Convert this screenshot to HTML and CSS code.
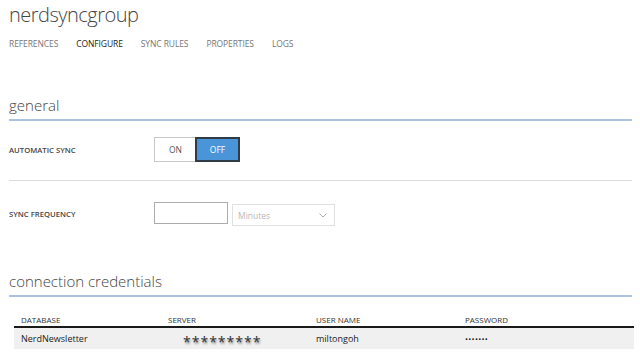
FILE: index.html
```html
<!DOCTYPE html>
<html>
<head>
<meta charset="utf-8">
<link rel="stylesheet" href="styles.css">
</head>
<body>
<div class="page">
  <h1 class="title">nerdsyncgroup</h1>
  <nav class="tabs">
    <span class="tab">REFERENCES</span>
    <span class="tab active">CONFIGURE</span>
    <span class="tab">SYNC RULES</span>
    <span class="tab">PROPERTIES</span>
    <span class="tab">LOGS</span>
  </nav>

  <h2 class="section">general</h2>
  <div class="row row-first">
    <div class="label">AUTOMATIC SYNC</div>
    <div class="toggle">
      <span class="opt">ON</span>
      <span class="opt on">OFF</span>
    </div>
  </div>
  <div class="row row-second">
    <div class="label">SYNC FREQUENCY</div>
    <div class="controls">
      <div class="input"></div>
      <div class="select">
        <span>Minutes</span>
        <svg width="8" height="5" viewBox="0 0 8 5"><path d="M0.5 0.5 L4 4 L7.5 0.5" fill="none" stroke="#aaa" stroke-width="1"/></svg>
      </div>
    </div>
  </div>

  <h2 class="section section2">connection credentials</h2>
  <div class="table">
    <div class="thead">
      <span class="c1">DATABASE</span>
      <span class="c2">SERVER</span>
      <span class="c3">USER NAME</span>
      <span class="c4">PASSWORD</span>
    </div>
    <div class="trow">
      <span class="c1">NerdNewsletter</span>
      <span class="c2 stars">*********</span>
      <span class="c3">miltongoh</span>
      <span class="c4 dots">•••••••</span>
    </div>
  </div>
</div>
</body>
</html>
```

FILE: styles.css
```css
* { box-sizing: border-box; }
html, body { margin: 0; padding: 0; background: #fff; }
body { font-family: "Open Sans", "Noto Sans", sans-serif; color: #333; }
.page { width: 640px; height: 353px; padding: 0 8px 0 9px; overflow: hidden; }

.title {
  margin: 0;
  padding-top: 1px;
  height: 31px;
  font-size: 20px;
  font-weight: 300;
  color: #444;
  line-height: 28px;
  letter-spacing: -0.5px;
}
.tabs {
  display: flex;
  gap: 18px;
  height: 24px;
  align-items: center;
  font-size: 8.5px;
  letter-spacing: -0.1px;
  color: #777;
}
.tab.active { color: #222; }

.section {
  margin: 0;
  margin-top: 36px;
  height: 30px;
  font-size: 15px;
  font-weight: 300;
  color: #444;
  line-height: 28px;
  border-bottom: 2px solid #a9c3e0;
}
.section2 { margin-top: 16px; }

.row {
  display: flex;
  align-items: center;
  border-bottom: 1px solid #dcdcdc;
}
.row-first { height: 60px; padding-bottom: 2px; }
.row-second { height: 70px; border-bottom: none; padding-bottom: 4px; }
.label {
  width: 145px;
  font-size: 7.7px;
  font-weight: 600;
  color: #444;
}
.toggle {
  display: flex;
  height: 25px;
  width: 86px;
  border: 1px solid #c8c8c8;
}
.opt {
  flex: 1;
  display: flex;
  align-items: center;
  justify-content: center;
  font-size: 8.5px;
  color: #555;
  background: #fff;
}
.opt.on {
  background: #4a94d8;
  color: #fff;
  border: 2px solid #2f3b47;
  margin: -1px;
}

.controls { display: flex; align-items: flex-start; gap: 4px; }
.input {
  width: 74px;
  height: 22px;
  border: 1px solid #acacac;
  background: #fff;
}
.select {
  width: 103px;
  height: 22px;
  margin-top: 2px;
  border: 1px solid #e0e0e0;
  display: flex;
  align-items: center;
  justify-content: space-between;
  padding: 0 7px 0 5px;
  font-size: 8.5px;
  color: #b8b8b8;
}

.table { margin: 15px 0 0 5px; width: 620px; }
.thead, .trow { display: flex; align-items: center; }
.thead {
  height: 16px;
  font-size: 8px;
  color: #333;
  border-bottom: 2px solid #1a1a1a;
}
.trow {
  height: 21px;
  background: #f0f0f0;
  font-size: 9px;
  color: #222;
}
.c1 { width: 154px; padding-left: 7px; }
.c2 { width: 148px; }
.c3 { width: 149px; }
.c4 { flex: 1; }
.stars {
  padding-left: 15px;
  font-size: 14px;
  letter-spacing: 1px;
  color: #333;
  text-shadow: 1px 2px 2px #999;
  line-height: 1;
  padding-top: 6px;
}
.dots { font-size: 8px; letter-spacing: 0.3px; }
```
